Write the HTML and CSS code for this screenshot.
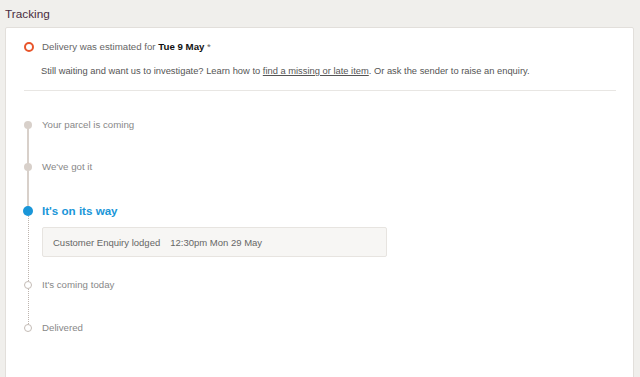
FILE: index.html
```html
<!DOCTYPE html>
<html>
<head>
  <meta charset="utf-8">
  <title>Tracking</title>
  <link rel="stylesheet" href="styles.css">
</head>
<body>
  <h2 class="section-title">Tracking</h2>

  <div class="card">
    <div class="estimate">
      <div class="estimate-row">
        <span class="ring"></span>
        <span>Delivery was estimated for <strong>Tue 9 May</strong> *</span>
      </div>
      <p class="estimate-note">Still waiting and want us to investigate? Learn how to <a href="#">find a missing or late item</a>. Or ask the sender to raise an enquiry.</p>
    </div>

    <ul class="timeline">
      <li class="step done">
        <div class="rail"><span class="dot"></span></div>
        <div class="step-body"><div class="label">Your parcel is coming</div></div>
      </li>
      <li class="step done">
        <div class="rail"><span class="dot"></span></div>
        <div class="step-body"><div class="label">We've got it</div></div>
      </li>
      <li class="step current">
        <div class="rail"><span class="dot"></span></div>
        <div class="step-body">
          <div class="label">It's on its way</div>
          <div class="event">
            <span class="event-name">Customer Enquiry lodged</span>
            <span class="event-time">12:30pm Mon 29 May</span>
          </div>
        </div>
      </li>
      <li class="step todo">
        <div class="rail"><span class="dot"></span></div>
        <div class="step-body"><div class="label">It's coming today</div></div>
      </li>
      <li class="step todo last">
        <div class="rail"><span class="dot"></span></div>
        <div class="step-body"><div class="label">Delivered</div></div>
      </li>
    </ul>
  </div>
</body>
</html>
```

FILE: styles.css
```css
* {
  margin: 0;
  padding: 0;
  box-sizing: border-box;
}

body {
  width: 640px;
  height: 377px;
  padding: 0 6px 0 5px;
  background: #f0efec;
  font-family: "Liberation Sans", Arial, sans-serif;
  color: #555;
  overflow: hidden;
}

.section-title {
  height: 27px;
  padding-top: 6px;
  font-size: 11.8px;
  font-weight: normal;
  line-height: 16px;
  color: #4a2c40;
}

.card {
  height: 352px;
  padding: 11px 17px 0 18px;
  background: white;
  border: 1px solid #e2dfdb;
  border-radius: 2px;
}

.estimate {
  border-bottom: 1px solid #e8e6e3;
  padding-bottom: 11px;
}

.estimate-row {
  display: flex;
  align-items: center;
  gap: 8px;
  font-size: 9.7px;
  line-height: 16px;
  color: #666;
}

.estimate-row strong {
  color: #111;
}

.ring {
  width: 10px;
  height: 10px;
  border: 2px solid #e8552b;
  border-radius: 50%;
}

.estimate-note {
  margin: 8px 0 0 17px;
  font-size: 9.35px;
  line-height: 16px;
  color: #555;
}

.estimate-note a {
  color: #555;
}

.timeline {
  list-style: none;
  margin: 26px 0 0 -1px;
}

.step {
  position: relative;
  display: flex;
  gap: 9px;
  padding-bottom: 26px;
}

.step:nth-child(2),
.step:nth-child(4) {
  padding-bottom: 27px;
}

.step.current {
  padding-bottom: 20px;
}

.step::before {
  content: "";
  position: absolute;
  left: 4px;
  top: 8px;
  bottom: -9px;
  border-left: 2px solid #d8d0ca;
}

.step.current::before,
.step.todo::before {
  border-left: 1px dotted #bdb4ae;
  left: 5px;
  bottom: -8px;
}

.step.current::before {
  top: 9px;
}

.step.last::before {
  display: none;
}

.rail {
  width: 10px;
  height: 16px;
  display: flex;
  align-items: center;
  justify-content: center;
  flex-shrink: 0;
}

.dot {
  position: relative;
  width: 8px;
  height: 8px;
  border-radius: 50%;
  background: #d8d0ca;
}

.todo .dot {
  background: white;
  border: 1px solid #c4bcb6;
}

.current .rail {
  height: 18px;
}

.current .dot {
  width: 10px;
  height: 10px;
  background: #1a96d8;
}

.label {
  font-size: 9.7px;
  line-height: 16px;
  color: #888;
}

.current .label {
  font-size: 11.6px;
  line-height: 18px;
  font-weight: bold;
  color: #1a96d8;
}

.event {
  display: flex;
  align-items: center;
  gap: 10px;
  width: 345px;
  height: 30px;
  margin-top: 7px;
  padding-left: 10px;
  background: #f7f6f4;
  border: 1px solid #e7e4e0;
  border-radius: 2px;
  font-size: 9.5px;
  color: #666;
}
```
